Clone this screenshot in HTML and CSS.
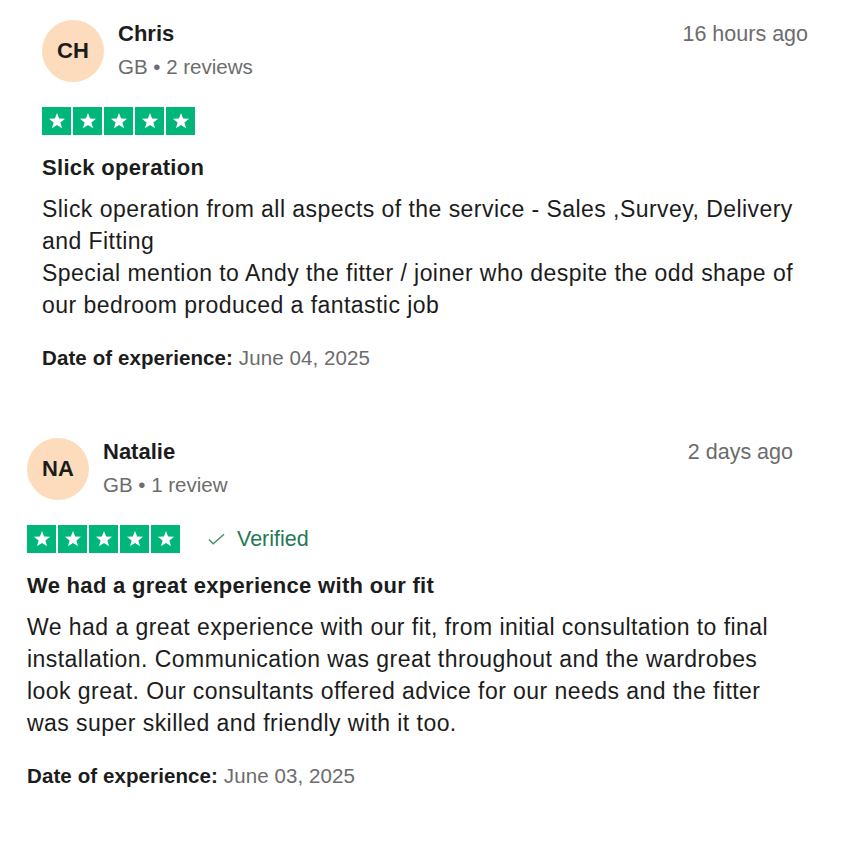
FILE: index.html
```html
<!DOCTYPE html>
<html lang="en">
<head>
    <meta charset="UTF-8">
    <meta name="viewport" content="width=device-width, initial-scale=1.0">
    <title>Reviews</title>
    <link rel="stylesheet" href="styles.css">
</head>
<body>
    <div class="review reviewOne">
        <div class="reviewHead">
            <div class="avatar">CH</div>
            <div class="userInfo">
                <p class="userName">Chris</p>
                <p class="userMeta">GB &bull; 2 reviews</p>
            </div>
            <p class="reviewTime">16 hours ago</p>
        </div>
        <div class="ratingRow">
            <div class="stars">
                <span class="star"><svg viewBox="0 0 24 24"><path d="M12 3.2l2.3 6.1 6.5.3-5.1 4 1.8 6.3L12 16.3l-5.5 3.6 1.8-6.3-5.1-4 6.5-.3z"/></svg></span>
                <span class="star"><svg viewBox="0 0 24 24"><path d="M12 3.2l2.3 6.1 6.5.3-5.1 4 1.8 6.3L12 16.3l-5.5 3.6 1.8-6.3-5.1-4 6.5-.3z"/></svg></span>
                <span class="star"><svg viewBox="0 0 24 24"><path d="M12 3.2l2.3 6.1 6.5.3-5.1 4 1.8 6.3L12 16.3l-5.5 3.6 1.8-6.3-5.1-4 6.5-.3z"/></svg></span>
                <span class="star"><svg viewBox="0 0 24 24"><path d="M12 3.2l2.3 6.1 6.5.3-5.1 4 1.8 6.3L12 16.3l-5.5 3.6 1.8-6.3-5.1-4 6.5-.3z"/></svg></span>
                <span class="star"><svg viewBox="0 0 24 24"><path d="M12 3.2l2.3 6.1 6.5.3-5.1 4 1.8 6.3L12 16.3l-5.5 3.6 1.8-6.3-5.1-4 6.5-.3z"/></svg></span>
            </div>
        </div>
        <h2 class="reviewTitle">Slick operation</h2>
        <p class="reviewText">Slick operation from all aspects of the service - Sales ,Survey, Delivery and Fitting<br>Special mention to Andy the fitter / joiner who despite the odd shape of our bedroom produced a fantastic job</p>
        <p class="reviewDate"><b>Date of experience:</b> June 04, 2025</p>
    </div>

    <div class="review reviewTwo">
        <div class="reviewHead">
            <div class="avatar">NA</div>
            <div class="userInfo">
                <p class="userName">Natalie</p>
                <p class="userMeta">GB &bull; 1 review</p>
            </div>
            <p class="reviewTime">2 days ago</p>
        </div>
        <div class="ratingRow">
            <div class="stars">
                <span class="star"><svg viewBox="0 0 24 24"><path d="M12 3.2l2.3 6.1 6.5.3-5.1 4 1.8 6.3L12 16.3l-5.5 3.6 1.8-6.3-5.1-4 6.5-.3z"/></svg></span>
                <span class="star"><svg viewBox="0 0 24 24"><path d="M12 3.2l2.3 6.1 6.5.3-5.1 4 1.8 6.3L12 16.3l-5.5 3.6 1.8-6.3-5.1-4 6.5-.3z"/></svg></span>
                <span class="star"><svg viewBox="0 0 24 24"><path d="M12 3.2l2.3 6.1 6.5.3-5.1 4 1.8 6.3L12 16.3l-5.5 3.6 1.8-6.3-5.1-4 6.5-.3z"/></svg></span>
                <span class="star"><svg viewBox="0 0 24 24"><path d="M12 3.2l2.3 6.1 6.5.3-5.1 4 1.8 6.3L12 16.3l-5.5 3.6 1.8-6.3-5.1-4 6.5-.3z"/></svg></span>
                <span class="star"><svg viewBox="0 0 24 24"><path d="M12 3.2l2.3 6.1 6.5.3-5.1 4 1.8 6.3L12 16.3l-5.5 3.6 1.8-6.3-5.1-4 6.5-.3z"/></svg></span>
            </div>
            <span class="verified">
                <svg class="checkIcon" viewBox="0 0 18 12"><path d="M1 6.5l4.5 4.5L17 1"/></svg>
                Verified
            </span>
        </div>
        <h2 class="reviewTitle">We had a great experience with our fit</h2>
        <p class="reviewText">We had a great experience with our fit, from initial consultation to final installation. Communication was great throughout and the wardrobes look great. Our consultants offered advice for our needs and the fitter was super skilled and friendly with it too.</p>
        <p class="reviewDate"><b>Date of experience:</b> June 03, 2025</p>
    </div>
</body>
</html>
```

FILE: styles.css
```css
*{
    padding: 0px;
    margin: 0px;
    box-sizing: border-box;
}
body{
    width: 100%;
    background-color: #ffffff;
    font-family: "Liberation Sans", Arial, sans-serif;
    color: #1c1c1c;
}
.review{
    width: 766px;
}
.reviewOne{
    margin: 20px 0 0 42px;
}
.reviewTwo{
    margin: 68px 0 0 27px;
}
.reviewHead{
    display: flex;
    align-items: center;
    height: 62px;
}
.avatar{
    width: 62px;
    height: 62px;
    border-radius: 50%;
    background-color: rgb(252, 220, 189);
    display: flex;
    align-items: center;
    justify-content: center;
    font-size: 22px;
    font-weight: bold;
    color: #1c1c1c;
    flex-shrink: 0;
}
.userInfo{
    margin-left: 14px;
    flex: 1;
}
.userName{
    font-size: 22px;
    font-weight: bold;
    line-height: 32px;
}
.userMeta{
    font-size: 20.5px;
    line-height: 34px;
    color: rgb(108, 108, 108);
}
.reviewTime{
    align-self: flex-start;
    margin-top: 2px;
    font-size: 21.5px;
    line-height: 24px;
    color: rgb(108, 108, 108);
}
.ratingRow{
    display: flex;
    align-items: center;
    margin-top: 25px;
}
.stars{
    display: flex;
    gap: 2px;
}
.star{
    width: 29px;
    height: 28px;
    background-color: rgb(0, 182, 122);
    display: flex;
    align-items: center;
    justify-content: center;
}
.star > svg{
    width: 22px;
    height: 22px;
    fill: #ffffff;
}
.verified{
    display: flex;
    align-items: center;
    margin-left: 28px;
    font-size: 21.5px;
    color: rgb(36, 122, 84);
}
.checkIcon{
    width: 17px;
    height: 12px;
    margin-right: 12px;
    fill: none;
    stroke: rgb(70, 140, 105);
    stroke-width: 1.4;
}
.reviewTitle{
    margin-top: 17px;
    font-size: 22px;
    letter-spacing: 0.3px;
    line-height: 32px;
    font-weight: bold;
}
.reviewText{
    margin-top: 9px;
    font-size: 23px;
    letter-spacing: 0.45px;
    line-height: 32px;
}
.reviewDate{
    margin-top: 25px;
    font-size: 20.5px;
    letter-spacing: 0.1px;
    line-height: 24px;
    color: rgb(108, 108, 108);
}
.reviewDate > b{
    color: #1c1c1c;
}
```
